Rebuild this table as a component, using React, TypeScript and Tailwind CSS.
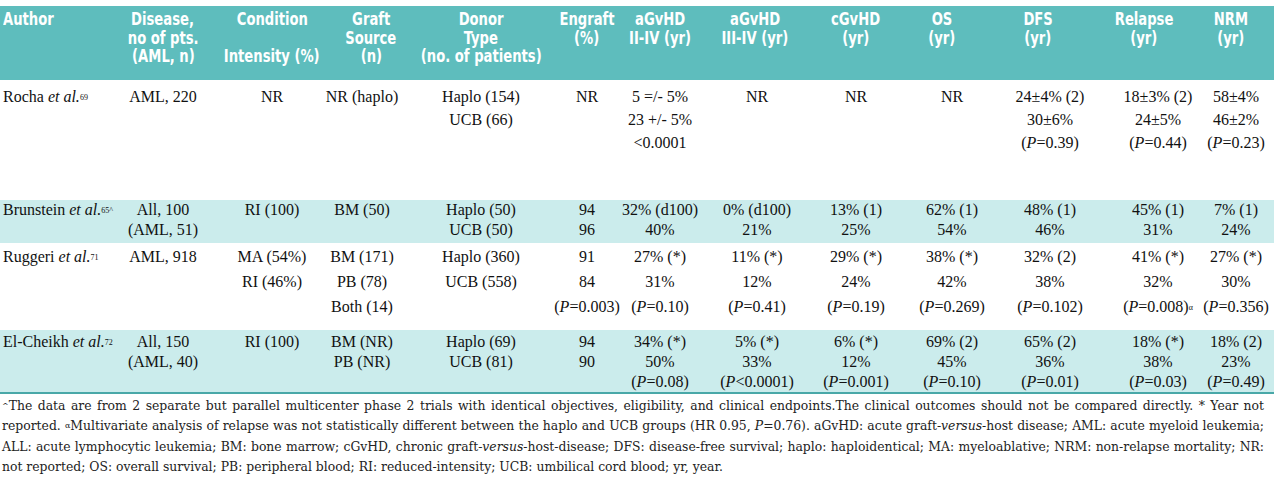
import React from "react";

type Cell = React.ReactNode[];
type Row = {
  author: React.ReactNode;
  cells: Cell[];
  bg: string;
  h: string;
  lh: string;
  pt: string;
};

const P = ({ v }: { v: string }) => (
  <span>
    (<i>P</i>
    {v})
  </span>
);

const Sup = ({ children }: { children: React.ReactNode }) => (
  <sup className="text-[8px] relative -top-[2px]">{children}</sup>
);

const Auth = ({ name, sup }: { name: string; sup: string }) => (
  <span>
    {name} <i>et al.</i>
    <Sup>{sup}</Sup>
  </span>
);

const rows: Row[] = [
  {
    author: <Auth name="Rocha" sup="69" />,
    bg: "bg-white",
    h: "h-[120px]",
    lh: "leading-[23px]",
    pt: "pt-[5px]",
    cells: [
      ["AML, 220"],
      ["NR"],
      ["NR (haplo)"],
      ["Haplo (154)", "UCB (66)"],
      ["NR"],
      ["5 =/- 5%", "23 +/- 5%", "<0.0001"],
      ["NR"],
      ["NR"],
      ["NR"],
      ["24±4% (2)", "30±6%", <P v="=0.39" />],
      ["18±3% (2)", "24±5%", <P v="=0.44" />],
      ["58±4%", "46±2%", <P v="=0.23" />],
    ],
  },
  {
    author: <Auth name="Brunstein" sup="65^" />,
    bg: "bg-[#cbecec]",
    h: "h-[43px]",
    lh: "leading-[20px]",
    pt: "pt-0",
    cells: [
      ["All, 100", "(AML, 51)"],
      ["RI (100)"],
      ["BM (50)"],
      ["Haplo (50)", "UCB (50)"],
      ["94", "96"],
      ["32% (d100)", "40%"],
      ["0% (d100)", "21%"],
      ["13% (1)", "25%"],
      ["62% (1)", "54%"],
      ["48% (1)", "46%"],
      ["45% (1)", "31%"],
      ["7% (1)", "24%"],
    ],
  },
  {
    author: <Auth name="Ruggeri" sup="71" />,
    bg: "bg-white",
    h: "h-[87px]",
    lh: "leading-[25px]",
    pt: "pt-[1px]",
    cells: [
      ["AML, 918"],
      ["MA (54%)", "RI (46%)"],
      ["BM (171)", "PB (78)", "Both (14)"],
      ["Haplo (360)", "UCB (558)"],
      ["91", "84", <P v="=0.003" />],
      ["27% (*)", "31%", <P v="=0.10" />],
      ["11% (*)", "12%", <P v="=0.41" />],
      ["29% (*)", "24%", <P v="=0.19" />],
      ["38% (*)", "42%", <P v="=0.269" />],
      ["32% (2)", "38%", <P v="=0.102" />],
      [
        "41% (*)",
        "32%",
        <span>
          (<i>P</i>=0.008)<Sup>α</Sup>
        </span>,
      ],
      ["27% (*)", "30%", <P v="=0.356" />],
    ],
  },
  {
    author: <Auth name="El-Cheikh" sup="72" />,
    bg: "bg-[#cbecec]",
    h: "h-[62px]",
    lh: "leading-[20px]",
    pt: "pt-[2px]",
    cells: [
      ["All, 150", "(AML, 40)"],
      ["RI (100)"],
      ["BM (NR)", "PB (NR)"],
      ["Haplo (69)", "UCB (81)"],
      ["94", "90"],
      ["34% (*)", "50%", <P v="=0.08" />],
      ["5% (*)", "33%", <P v="<0.0001" />],
      ["6% (*)", "12%", <P v="=0.001" />],
      ["69% (2)", "45%", <P v="=0.10" />],
      ["65% (2)", "36%", <P v="=0.01" />],
      ["18% (*)", "38%", <P v="=0.03" />],
      ["18% (2)", "23%", <P v="=0.49" />],
    ],
  },
];

const GRID =
  "grid grid-cols-[111px_104px_114px_66px_172px_40px_106px_88px_110px_82px_114px_102px_54px_11px]";

const headers: { lines: string[]; cls: string }[] = [
  { lines: ["Disease,", "no of pts.", "(AML, n)"], cls: "" },
  { lines: ["Condition", "\u00a0", "Intensity (%)"], cls: "" },
  { lines: ["Graft", "Source", "(n)"], cls: "pl-[18px]" },
  { lines: ["Donor", "Type", "(no. of patients)"], cls: "" },
  { lines: ["Engraft", "(%)"], cls: "" },
  { lines: ["aGvHD", "II-IV (yr)"], cls: "" },
  { lines: ["aGvHD", "III-IV (yr)"], cls: "pr-[4px]" },
  { lines: ["cGvHD", "(yr)"], cls: "" },
  { lines: ["OS", "(yr)"], cls: "pr-[20px]" },
  { lines: ["DFS", "(yr)"], cls: "pr-[24px]" },
  { lines: ["Relapse", "(yr)"], cls: "pr-[28px]" },
  { lines: ["NRM", "(yr)"], cls: "pr-[10px]" },
];

export default function App() {
  return (
    <div className="w-[1280px] h-[492px] bg-white pt-[6px] overflow-hidden">
      <div className="w-[1274px]">
        {/* header */}
        <div
          className={`${GRID} bg-[#5ebdbd] h-[74px] pt-[4px] text-white font-bold text-[17px] leading-[18.5px] font-['DejaVu_Sans_Condensed','DejaVu_Sans',sans-serif]`}
        >
          <div className="pl-[3px] whitespace-nowrap">
            <div className="scale-x-[0.86] origin-left">Author</div>
          </div>
          {headers.map((h, i) => (
            <div
              key={i}
              className={`flex flex-col items-center whitespace-nowrap ${h.cls}`}
            >
              {h.lines.map((l, j) => (
                <div key={j} className="scale-x-[0.86]">
                  {l}
                </div>
              ))}
            </div>
          ))}
          <div />
        </div>

        {/* body */}
        <div className="font-['Liberation_Serif',serif] text-[16px] text-[#111]">
          {rows.map((r, i) => (
            <div key={i} className={`${GRID} ${r.bg} ${r.h} ${r.lh} ${r.pt}`}>
              <div className="pl-[3px] whitespace-nowrap">{r.author}</div>
              {r.cells.map((c, j) => (
                <div
                  key={j}
                  className="flex flex-col items-center whitespace-nowrap"
                >
                  {c.map((l, k) => (
                    <div key={k}>{l}</div>
                  ))}
                </div>
              ))}
              <div />
            </div>
          ))}
          <div className="h-[2px] bg-[#49a8a8]" />
        </div>

        {/* footnote */}
        <div className="pt-[2px] pl-[2px] w-[1264px] font-['DejaVu_Serif',serif] text-[12.4px] leading-[20.3px] text-[#222]">
          <div className="whitespace-nowrap text-justify [text-align-last:justify]">
            <Sup>^</Sup>The data are from 2 separate but parallel multicenter
            phase 2 trials with identical objectives, eligibility, and clinical
            endpoints.The clinical outcomes should not be compared directly. *
            Year not
          </div>
          <div className="whitespace-nowrap text-justify [text-align-last:justify]">
            reported. <Sup>α</Sup>Multivariate analysis of relapse was not
            statistically different between the haplo and UCB groups (HR 0.95,{" "}
            <i>P</i>=0.76). aGvHD: acute graft-<i>versus</i>-host disease; AML:
            acute myeloid leukemia;
          </div>
          <div className="whitespace-nowrap text-justify [text-align-last:justify]">
            ALL: acute lymphocytic leukemia; BM: bone marrow; cGvHD, chronic
            graft-<i>versus</i>-host-disease; DFS: disease-free survival; haplo:
            haploidentical; MA: myeloablative; NRM: non-relapse mortality; NR:
          </div>
          <div className="whitespace-nowrap">
            not reported; OS: overall survival; PB: peripheral blood; RI:
            reduced-intensity; UCB: umbilical cord blood; yr, year.
          </div>
        </div>
      </div>
    </div>
  );
}
